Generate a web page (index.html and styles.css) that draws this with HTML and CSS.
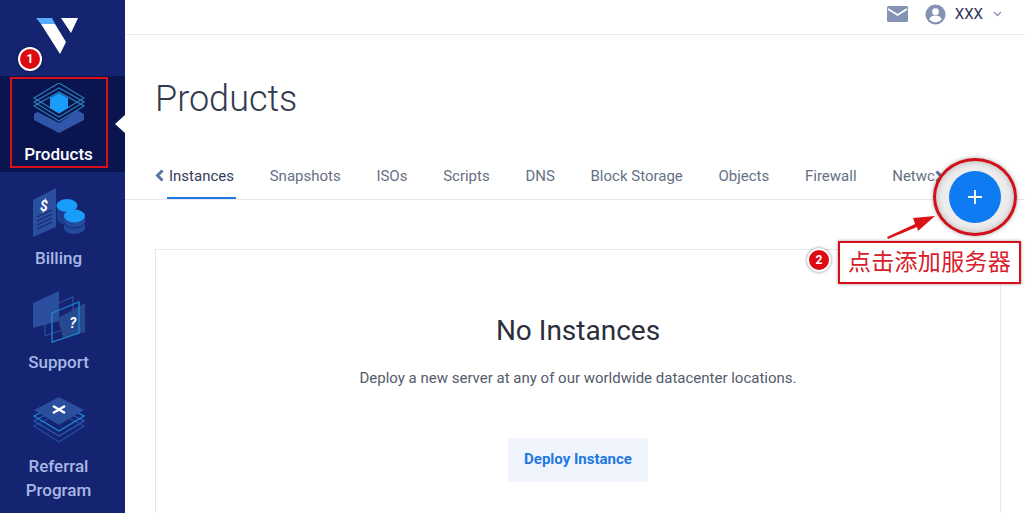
FILE: index.html
```html
<!DOCTYPE html>
<html>
<head>
    <title>Products</title>
    <link rel="stylesheet" href="styles.css">
</head>
<body>
    <aside class="sidebar">
        <div class="logo">
            <svg width="125" height="76" viewBox="0 0 125 76">
                <polygon points="41,24 55,24 66,42 60,54" fill="#fff"/>
                <polygon points="36,18 52,18 55,24 41,24" fill="#55aef7"/>
                <polygon points="61,18 78,18 71,33" fill="#fff"/>
            </svg>
        </div>
        <a class="nav-item active">
            <svg class="nav-icon" width="52" height="52" viewBox="0 0 52 52">
                <polygon points="1,31 26,17 51,31 51,37 26,50 1,37" fill="#2f56a8"/>
                <polygon points="1,23 26,9 51,23 26,40 1,27" fill="#0a1550"/>
                <g fill="none" stroke="#2a7db8" stroke-width="1.2">
                    <polygon points="1,15 26,0 51,15 26,30"/>
                    <polygon points="1,19 26,5 51,19 26,34"/>
                    <polygon points="1,23 26,9 51,23 26,38"/>
                </g>
                <polygon points="26,10 35,15 35,25 26,30 17,25 17,15" fill="#1a9cfb"/>
            </svg>
            <span>Products</span>
        </a>
        <a class="nav-item">
            <svg class="nav-icon" width="52" height="52" viewBox="0 0 52 52">
                <polygon points="0,13 23,1 23,40 0,50" fill="#2b4f9f"/>
                <text x="11" y="24" text-anchor="middle" class="icon-text">$</text>
                <g stroke="#16286f" stroke-width="1.2">
                    <line x1="4" y1="30" x2="19" y2="23"/>
                    <line x1="4" y1="34" x2="19" y2="27"/>
                    <line x1="4" y1="38" x2="19" y2="31"/>
                    <line x1="4" y1="42" x2="19" y2="35"/>
                </g>
                <path d="M24,19v13c0,3 5,6 10,6s10,-3 10,-6v-13z" fill="#1c3f8f"/>
                <ellipse cx="34" cy="18.500" rx="10.500" ry="6.500" fill="#1a9cfb"/>
                <path d="M31,29v12c0,3 5,6 10,6s11,-3 11,-6v-12z" fill="#234a9e"/>
                <path d="M31,36c1,3 6,5 10,5s10,-2 11,-5" fill="none" stroke="#16286f"/>
                <ellipse cx="41.500" cy="29" rx="10.500" ry="6.500" fill="#1a9cfb"/>
            </svg>
            <span>Billing</span>
        </a>
        <a class="nav-item">
            <svg class="nav-icon" width="52" height="52" viewBox="0 0 52 52">
                <polygon points="0,12 26,0 26,30 0,37" fill="#2b4f9f"/>
                <polygon points="12,18 40,6 40,35 12,45" fill="none" stroke="#2b4f9f" stroke-width="1.2"/>
                <polygon points="25,27 52,12 52,41 30,47" fill="#27498f"/>
                <polygon points="19,22 46,11 46,42 19,51" fill="none" stroke="#1f86cf" stroke-width="1.3"/>
                <text x="40" y="37" text-anchor="middle" class="icon-text">?</text>
            </svg>
            <span>Support</span>
        </a>
        <a class="nav-item">
            <svg class="nav-icon" width="52" height="52" viewBox="0 0 52 52">
                <g fill="none" stroke-width="1.4">
                    <polygon points="1,31 26,18 51,31 26,47" stroke="#234a9e"/>
                    <polygon points="1,26 26,13 51,26 26,41" stroke="#2a5cb4"/>
                    <polygon points="1,21 26,8 51,21 26,36" stroke="#1f86d6"/>
                </g>
                <polygon points="1,15 26,2 51,15 26,30" fill="#2b4f9f"/>
                <path d="M20,11l12,7M32,11l-12,7" stroke="#fff" stroke-width="2.400"/>
            </svg>
            <span>Referral<br>Program</span>
        </a>
    </aside>

    <main class="content">
        <header class="topbar">
            <svg width="21" height="16" viewBox="0 0 21 16">
                <rect width="21" height="16" rx="1.500" fill="#8492b4"/>
                <path d="M1,3l9.500,6l9.500,-6" fill="none" stroke="#fff" stroke-width="1.800"/>
            </svg>
            <svg class="user-icon" width="21" height="21" viewBox="0 0 22 22">
                <circle cx="11" cy="11" r="10.500" fill="#8492b4"/>
                <circle cx="11" cy="8" r="3.500" fill="#fff"/>
                <path d="M4.500,16c1,-3 4,-4 6.500,-4s5.500,1 6.500,4c-1.500,2 -4,3 -6.500,3s-5,-1 -6.500,-3z" fill="#fff"/>
            </svg>
            <span class="user-name">XXX</span>
            <svg class="caret" width="9" height="6" viewBox="0 0 9 6">
                <path d="M1,1l3.500,3.500l3.500,-3.500" fill="none" stroke="#8492b4" stroke-width="1.300"/>
            </svg>
        </header>

        <h1>Products</h1>

        <nav class="tabs">
            <svg class="tab-prev" width="9" height="13" viewBox="0 0 9 13">
                <path d="M7.500,1.500l-5,5l5,5" fill="none" stroke="#5c74a4" stroke-width="3"/>
            </svg>
            <div class="tab-list">
                <a class="tab current">Instances</a>
                <a class="tab">Snapshots</a>
                <a class="tab">ISOs</a>
                <a class="tab">Scripts</a>
                <a class="tab">DNS</a>
                <a class="tab">Block Storage</a>
                <a class="tab">Objects</a>
                <a class="tab">Firewall</a>
                <a class="tab">Netwc</a>
            </div>
            <svg class="tab-next" width="9" height="13" viewBox="0 0 9 13">
                <path d="M1.500,1.500l5,5l-5,5" fill="none" stroke="#5c74a4" stroke-width="3"/>
            </svg>
        </nav>

        <section class="empty-card">
            <h2>No Instances</h2>
            <p>Deploy a new server at any of our worldwide datacenter locations.</p>
            <button>Deploy Instance</button>
        </section>
    </main>

    <!-- screenshot annotations -->
    <div class="badge badge-one">1</div>
    <div class="mark-products"></div>
    <div class="add-halo">
        <div class="add-button">
            <svg width="16" height="16" viewBox="0 0 16 16">
                <path d="M8,1v14M1,8h14" stroke="#fff" stroke-width="1.800"/>
            </svg>
        </div>
    </div>
    <svg class="mark-arrow" width="60" height="36" viewBox="0 0 60 36">
        <polygon points="1,29 29,16 27,10 49,8 32,23 31,19 2,31" fill="#dc1219"/>
    </svg>
    <div class="badge badge-two">2</div>
    <div class="mark-label">点击添加服务器</div>
</body>
</html>
```

FILE: styles.css
```css
html, body {
    height: 100%;
}
body {
    margin: 0;
    display: flex;
    overflow: hidden;
    background: #fff;
    font-family: Roboto, Arial, sans-serif;
}
.sidebar {
    width: 125px;
    flex: none;
    background: #142470;
}
.logo {
    height: 76px;
}
.logo svg {
    display: block;
}
.nav-item {
    display: flex;
    flex-direction: column;
    align-items: center;
    box-sizing: border-box;
    height: 104px;
    padding: 15px 8px 0 0;
    color: #a9b7e6;
    font-size: 17px;
    font-weight: 500;
    line-height: 24px;
    text-align: center;
}
.nav-icon {
    flex: none;
    margin-bottom: 7px;
}
.nav-item.active {
    position: relative;
    height: 96px;
    padding-top: 7px;
    background: #0a1550;
    color: #fff;
}
/* white notch pointing at the active item */
.nav-item.active::after {
    content: "";
    position: absolute;
    right: 0;
    top: 39px;
    border: 9px solid transparent;
    border-right: 10px solid #fff;
    border-left: 0;
}
.icon-text {
    fill: #fff;
    font-size: 14px;
    font-weight: 700;
    font-style: italic;
    font-family: Roboto, Arial, sans-serif;
}
.content {
    flex: 1;
    min-width: 0;
}
.topbar {
    display: flex;
    align-items: center;
    justify-content: flex-end;
    box-sizing: border-box;
    height: 35px;
    padding: 0 23px 6px 0;
    border-bottom: 1px solid #e9ebf0;
}
.user-icon {
    margin-left: 17px;
}
.user-name {
    margin-left: 9px;
    color: #2e3558;
    font-size: 15px;
}
.caret {
    margin-left: 10px;
}
h1 {
    margin: 40px 0 0 30px;
    color: #333a4d;
    font-size: 36px;
    font-weight: 300;
    line-height: 48px;
}
.tabs {
    display: flex;
    align-items: flex-start;
    box-sizing: border-box;
    height: 62px;
    margin-top: 15px;
    border-bottom: 1px solid #e4e7ec;
}
.tab-prev {
    flex: none;
    margin: 31px 0 0 30px;
}
.tab-next {
    flex: none;
    margin: 32px 0 0 -2px;
}
.tab-list {
    display: flex;
    gap: 31.7px;
    width: 770px;
    margin-left: 3px;
}
.tab {
    flex: none;
    box-sizing: border-box;
    height: 61px;
    padding: 26px 2px 0;
    color: #667085;
    font-size: 15px;
    line-height: 24px;
    white-space: nowrap;
}
.tab.current {
    color: #343c5e;
    border-bottom: 2px solid #1e78e0;
}
.empty-card {
    box-sizing: border-box;
    height: 400px;
    margin: 49px 24px 0 30px;
    border: 1px solid #e6e8ec;
    text-align: center;
}
h2 {
    margin: 63px 0 0;
    color: #2b2f3a;
    font-size: 28px;
    font-weight: 400;
    line-height: 36px;
}
p {
    margin: 17px 0 0;
    color: #545b6b;
    font-size: 15px;
    line-height: 24px;
}
button {
    width: 140px;
    height: 44px;
    margin-top: 48px;
    padding: 0 0 2px;
    border: none;
    background: #f0f5fd;
    color: #1e78e0;
    font-family: Roboto, Arial, sans-serif;
    font-size: 15px;
    font-weight: 700;
}
/* annotations drawn over the screenshot */
.badge {
    position: absolute;
    width: 20px;
    height: 20px;
    border: 2px solid #fff;
    border-radius: 50%;
    background: #de0a12;
    box-shadow: 0 0 3px rgba(0, 0, 0, 0.5);
    color: #fff;
    font-size: 12px;
    font-weight: 700;
    line-height: 20px;
    text-align: center;
}
.badge-one {
    left: 18px;
    top: 47px;
}
.badge-two {
    left: 807px;
    top: 248px;
}
.mark-products {
    position: absolute;
    left: 10px;
    top: 77px;
    width: 94px;
    height: 87px;
    border: 2px solid #d8101a;
}
.add-halo {
    position: absolute;
    left: 933px;
    top: 158px;
    display: flex;
    align-items: center;
    justify-content: center;
    box-sizing: border-box;
    width: 84px;
    height: 78px;
    border: 3px solid #d0101a;
    border-radius: 50%;
    background: #ececec;
    box-shadow: 0 0 4px rgba(0, 0, 0, 0.35), inset 0 0 6px rgba(0, 0, 0, 0.25);
}
.add-button {
    display: flex;
    align-items: center;
    justify-content: center;
    width: 52px;
    height: 52px;
    border-radius: 50%;
    background: #0f7bf2;
}
.mark-arrow {
    position: absolute;
    left: 886px;
    top: 208px;
}
.mark-label {
    position: absolute;
    left: 838px;
    top: 241px;
    box-sizing: border-box;
    width: 183px;
    height: 43px;
    border: 2px solid #d8101a;
    background: #fff;
    box-shadow: 0 0 3px rgba(0, 0, 0, 0.4);
    color: #d8202a;
    font-family: "Noto Sans CJK SC", sans-serif;
    font-size: 23px;
    letter-spacing: 0.3px;
    line-height: 35px;
    text-align: center;
}
```
